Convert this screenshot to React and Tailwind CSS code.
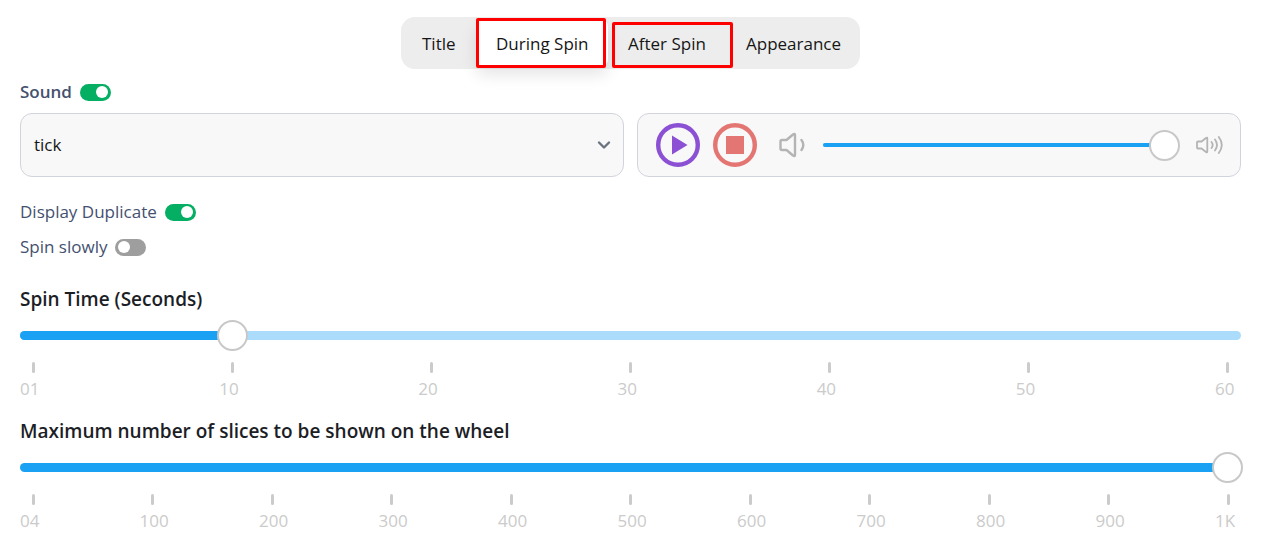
import { useState } from 'react';

const spinTicks = ['01', '10', '20', '30', '40', '50', '60'];
const sliceTicks = ['04', '100', '200', '300', '400', '500', '600', '700', '800', '900', '1K'];

const thumbStyles =
    'h-[31px] cursor-pointer appearance-none bg-transparent [&::-webkit-slider-thumb]:h-[31px] [&::-webkit-slider-thumb]:w-[31px] [&::-webkit-slider-thumb]:appearance-none [&::-webkit-slider-thumb]:rounded-full [&::-webkit-slider-thumb]:border-2 [&::-webkit-slider-thumb]:border-[#c8c8c8] [&::-webkit-slider-thumb]:bg-white';

function Toggle({ id, label, checked, onChange, bold }) {
    return (
        <div className="flex items-center gap-2">
            <label htmlFor={id} className={bold ? 'font-semibold text-[#44516f]' : 'text-[#44516f]'}>
                {label}
            </label>
            <input
                id={id}
                type="checkbox"
                role="switch"
                checked={checked}
                onChange={(e) => onChange(e.target.checked)}
                className="flex h-[17px] w-[31px] cursor-pointer appearance-none items-center rounded-full bg-[#9e9e9e] px-[3px] before:h-3 before:w-3 before:rounded-full before:bg-white checked:justify-end checked:bg-[#04ae62]"
            />
        </div>
    );
}

function ScaleSlider({ id, label, max, step, value, onChange, ticks }) {
    const ratio = value / max;

    return (
        <section>
            <label htmlFor={id} className="block text-[19px] leading-6 font-semibold text-[#1c1e26]">
                {label}
            </label>
            <div className="mt-[9px] grid items-center">
                <div className="col-start-1 row-start-1 h-[9px] overflow-hidden rounded-full bg-[#acdcfc]">
                    <div
                        className="h-full bg-[#1ba1f4]"
                        style={{ width: ratio === 1 ? '100%' : `calc(13px + (100% - 26px) * ${ratio})` }}
                    />
                </div>
                <input
                    id={id}
                    type="range"
                    min="0"
                    max={max}
                    step={step}
                    value={value}
                    onChange={(e) => onChange(Number(e.target.value))}
                    className={`col-start-1 row-start-1 -mx-0.5 ${thumbStyles}`}
                />
            </div>
            <div className="mt-[11px] flex justify-between text-[17px] leading-6 text-[#cbcbcb]">
                {ticks.map((tick) => (
                    <div key={tick} className="w-[26px] whitespace-nowrap">
                        <div className="mx-auto h-[11px] w-[3px] rounded-xs bg-[#cbcbcb]" />
                        <div className="mt-1">{tick}</div>
                    </div>
                ))}
            </div>
        </section>
    );
}

export default function App() {
    const [tab, setTab] = useState('During Spin');
    const [sound, setSound] = useState(true);
    const [duplicate, setDuplicate] = useState(true);
    const [slow, setSlow] = useState(false);
    const [volume, setVolume] = useState(100);
    const [spinTime, setSpinTime] = useState(10);
    const [slices, setSlices] = useState(1000);

    const tabClass = (name) =>
        `relative h-12 cursor-pointer rounded-lg px-5 pt-0.5 text-left whitespace-nowrap ${
            tab === name ? 'bg-white shadow-[0_8px_16px_rgba(0,0,0,0.10)]' : ''
        }`;

    return (
        <main className="bg-white pt-[17px] pr-[21px] pb-6 pl-5 font-['Open_Sans',sans-serif] text-[17px] leading-6 text-[#161616]">
            {/* Tabs */}
            <nav className="mx-auto flex h-[52px] w-fit items-center rounded-[14px] bg-[#ededed] px-px">
                <button type="button" onClick={() => setTab('Title')} className={`w-[74px] ${tabClass('Title')}`}>
                    Title
                </button>
                <button type="button" onClick={() => setTab('During Spin')} className={`w-[132px] ${tabClass('During Spin')}`}>
                    During Spin
                    <span className="absolute -top-px right-0.5 -bottom-px left-0 rounded-xs border-3 border-[#ff0000]" />
                </button>
                <button type="button" onClick={() => setTab('After Spin')} className={`w-[118px] ${tabClass('After Spin')}`}>
                    After Spin
                    <span className="absolute top-[3px] -right-[7px] -bottom-px left-1 rounded-xs border-3 border-[#ff0000]" />
                </button>
                <button type="button" onClick={() => setTab('Appearance')} className={`w-[133px] ${tabClass('Appearance')}`}>
                    Appearance
                </button>
            </nav>

            {/* Sound */}
            <div className="mt-[11px]">
                <Toggle id="sound" label="Sound" checked={sound} onChange={setSound} bold />
            </div>
            <div className="mt-[9px] grid grid-cols-2 gap-[13px]">
                <div className="grid items-center">
                    <select
                        aria-label="Sound name"
                        className="col-start-1 row-start-1 h-16 w-full appearance-none rounded-xl border border-[#d2d4dd] bg-[#f8f8f8] px-[13px]"
                    >
                        <option>tick</option>
                    </select>
                    <svg
                        viewBox="0 0 14 10"
                        className="pointer-events-none col-start-1 row-start-1 mr-[13px] h-[10px] w-[14px] justify-self-end"
                        fill="none"
                        stroke="#6b7280"
                        strokeWidth="2.4"
                        strokeLinecap="round"
                        strokeLinejoin="round"
                    >
                        <path d="M2 2.5l5 5 5-5" />
                    </svg>
                </div>
                <div className="flex h-16 items-center rounded-xl border border-[#d2d4dd] bg-[#f8f8f8] pr-[17px] pl-[18px]">
                    <button type="button" aria-label="Play" className="shrink-0 cursor-pointer">
                        <svg viewBox="0 0 44 44" className="size-11">
                            <circle cx="22" cy="22" r="19.8" fill="none" stroke="#8b50d3" strokeWidth="4.4" />
                            <path d="M16 12.5v19L31.5 22z" fill="#8b50d3" />
                        </svg>
                    </button>
                    <button type="button" aria-label="Stop" className="ml-[13px] shrink-0 cursor-pointer">
                        <svg viewBox="0 0 44 44" className="size-11">
                            <circle cx="22" cy="22" r="19.8" fill="none" stroke="#e37672" strokeWidth="4.4" />
                            <path d="M13 13h18v18H13z" fill="#e37672" />
                        </svg>
                    </button>
                    <svg
                        viewBox="0 0 26 26"
                        className="ml-[22px] size-[26px] shrink-0"
                        fill="none"
                        stroke="#b4b4b4"
                        strokeWidth="2.4"
                        strokeLinecap="round"
                        strokeLinejoin="round"
                    >
                        <path d="M1.5 9.5Q1.5 8 3 8h4.5l6.500-5.500Q16 1.200 16 3v20q0 1.800-2 .5L7.500 18H3q-1.500 0-1.500-1.500z" />
                        <path d="M22.500 8q3.600 5 0 10" />
                    </svg>
                    <div className="ml-[18px] grid min-w-0 flex-1 items-center">
                        <div className="col-start-1 row-start-1 mr-4 h-1 rounded-full bg-[#acdcfc]">
                            <div className="h-full rounded-full bg-[#1ba1f4]" style={{ width: `${volume}%` }} />
                        </div>
                        <input
                            type="range"
                            aria-label="Volume"
                            value={volume}
                            onChange={(e) => setVolume(Number(e.target.value))}
                            className={`col-start-1 row-start-1 w-full min-w-0 ${thumbStyles}`}
                        />
                    </div>
                    <svg
                        viewBox="0 0 27 20"
                        className="ml-4 h-5 w-[27px] shrink-0"
                        fill="none"
                        stroke="#b4b4b4"
                        strokeWidth="1.8"
                        strokeLinecap="round"
                        strokeLinejoin="round"
                    >
                        <path d="M1 7.500Q1 6.500 2 6.500h3.500L10 3Q11.300 2 11.300 3.500v13q0 1.500-1.300.5L5.500 13.500H2q-1 0-1-1z" />
                        <path d="M15.500 7q2.400 3 0 6M19 4.500q4 5.500 0 11M22.800 2q6 8 0 16" />
                    </svg>
                </div>
            </div>

            {/* Options */}
            <div className="mt-[23px] flex flex-col gap-[11px]">
                <Toggle id="duplicate" label="Display Duplicate" checked={duplicate} onChange={setDuplicate} />
                <Toggle id="slow" label="Spin slowly" checked={slow} onChange={setSlow} />
            </div>

            {/* Scales */}
            <div className="mt-7 flex flex-col gap-[18px]">
                <ScaleSlider
                    id="spin-time"
                    label="Spin Time (Seconds)"
                    max={60}
                    step={1}
                    value={spinTime}
                    onChange={setSpinTime}
                    ticks={spinTicks}
                />
                <ScaleSlider
                    id="slices"
                    label="Maximum number of slices to be shown on the wheel"
                    max={1000}
                    step={1}
                    value={slices}
                    onChange={setSlices}
                    ticks={sliceTicks}
                />
            </div>
        </main>
    );
}
